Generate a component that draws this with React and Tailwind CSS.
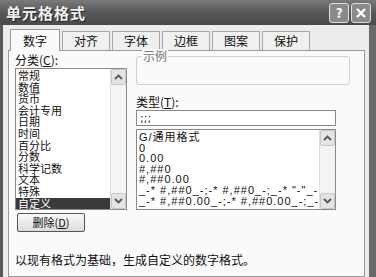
import React from 'react';

const cjk = { fontFamily: '"Noto Sans CJK SC", "Liberation Sans", sans-serif' };

const categories = ['常规', '数值', '货币', '会计专用', '日期', '时间', '百分比', '分数', '科学记数', '文本', '特殊', '自定义'];
const formats = [
  'G/通用格式',
  '0',
  '0.00',
  '#,##0',
  '#,##0.00',
  '_-* #,##0_-;-* #,##0_-;_-* "-"_-;_-@_-',
  '_-* #,##0.00_-;-* #,##0.00_-;_-* "-"??_-;_-@_-',
];
const tabs = ['数字', '对齐', '字体', '边框', '图案', '保护'];

const ScrollBar = () => (
  <div className="flex w-[16px] shrink-0 flex-col bg-[#f4f4f4] border-l border-[#e0e0e0]">
    <div className="flex h-[16px] items-center justify-center rounded-[2px] border border-[#c8c8c8] bg-[#e4e4e4]">
      <svg width="9" height="6" viewBox="0 0 9 6"><path d="M1 5 L4.5 1.5 L8 5" stroke="#555" strokeWidth="1.8" fill="none" /></svg>
    </div>
    <div className="flex-1" />
    <div className="flex h-[16px] items-center justify-center rounded-[2px] border border-[#c8c8c8] bg-[#e4e4e4]">
      <svg width="9" height="6" viewBox="0 0 9 6"><path d="M1 1 L4.5 4.5 L8 1" stroke="#555" strokeWidth="1.8" fill="none" /></svg>
    </div>
  </div>
);

export default function App() {
  return (
    <div className="relative flex h-[277px] w-[376px] flex-col overflow-hidden bg-[#ececec] text-[#111]" style={cjk}>
      {/* title bar */}
      <div className="flex h-[25px] shrink-0 items-center justify-between bg-gradient-to-b from-[#7a7a7a] via-[#585858] to-[#4a4a4a] pl-[6px] pr-[5px]">
        <span className="text-[15px] font-bold leading-none tracking-[1px] text-[#f2f2f2] [text-shadow:1px_1px_0_#222]">单元格格式</span>
        <div className="flex gap-[2px]">
          <div className="flex h-[20px] w-[20px] items-center justify-center rounded-[3px] border border-[#ddd] bg-[#8a8a8a] text-[13px] font-bold leading-none text-white">?</div>
          <div className="flex h-[20px] w-[20px] items-center justify-center rounded-[3px] border border-[#ddd] bg-[#8a8a8a]">
            <svg width="12" height="12" viewBox="0 0 12 12"><path d="M2 2 L10 10 M10 2 L2 10" stroke="#fff" strokeWidth="2.4" /></svg>
          </div>
        </div>
      </div>

      <div className="flex flex-1 border-l-[3px] border-r-[7px] border-l-[#5a5a5a] border-r-[#6a6a6a] pl-[5px] pr-[4px] pt-[4px]">
        <div className="flex min-w-0 flex-1 flex-col">
          {/* tabs */}
          <div className="flex h-[21px] items-end pl-[2px]">
            {tabs.map((t, i) => (
              <div
                key={t}
                className={
                  i === 0
                    ? 'relative z-10 -mb-px flex h-[22px] w-[50px] items-center justify-center border border-b-0 border-[#9a9a9a] bg-[#fafafa] text-[12px]'
                    : 'flex h-[19px] w-[48px] items-center justify-center border border-b-0 border-[#a8a8a8] bg-[#f0f0f0] text-[12px] ml-[2px]'
                }
              >
                {t}
              </div>
            ))}
          </div>

          {/* panel */}
          <div className="flex flex-1 flex-col border border-[#9a9a9a] bg-[#fafafa] pl-[6px] pr-[6px] pt-[2px]">
            <div className="flex gap-[9px]">
              {/* left column */}
              <div className="flex w-[112px] shrink-0 flex-col">
                <div className="h-[14px] text-[12px] leading-[14px]">分类(<span className="underline">C</span>):</div>
                <div className="mt-[1px] flex h-[142px] border border-[#8a8a8a] bg-white">
                  <div className="flex flex-1 flex-col pt-[1px]">
                    {categories.map((c, i) => (
                      <div
                        key={c}
                        className={
                          i === categories.length - 1
                            ? 'h-[11.6px] bg-[#3a3a3a] pl-[2px] text-[11px] leading-[11.6px] text-white'
                            : 'h-[11.6px] pl-[2px] text-[11px] leading-[11.6px]'
                        }
                      >
                        {c}
                      </div>
                    ))}
                  </div>
                  <ScrollBar />
                </div>
                <div className="mt-[3px] ml-[2px] flex h-[19px] w-[68px] items-center justify-center rounded-[2px] border border-[#555] bg-gradient-to-b from-[#fafafa] to-[#dcdcdc] text-[11px]">
                  删除(<span className="underline">D</span>)
                </div>
              </div>

              {/* right column */}
              <div className="flex min-w-0 flex-1 flex-col pr-[8px]">
                <div className="relative mt-[3px] h-[29px] rounded-[3px] border border-[#d0d0d0]">
                  <span className="absolute -top-[8px] left-[5px] bg-[#fafafa] px-[1px] text-[12px] leading-[14px] text-[#777]">示例</span>
                </div>
                <div className="mt-[10px] text-[12px] leading-[14px]">类型(<span className="underline">T</span>):</div>
                <div className="mt-[1px] mr-[14px] flex h-[16px] items-center border border-[#8a8a8a] bg-white pl-[3px] text-[11px] leading-none" style={{ fontFamily: '"DejaVu Sans", sans-serif' }}>;;;</div>
                <div className="mt-[3px] mr-[14px] flex h-[81px] border border-[#8a8a8a] bg-white">
                  <div className="min-w-0 flex-1 overflow-hidden pl-[2px] pt-[2px]">
                    {formats.map((f) => (
                      <div key={f} className="h-[10.6px] whitespace-nowrap text-[11px] leading-[10.6px] tracking-[1px]" style={{ fontFamily: '"Liberation Sans", "Noto Sans CJK SC", sans-serif' }}>
                        {f}
                      </div>
                    ))}
                  </div>
                  <ScrollBar />
                </div>
              </div>
            </div>
            <div className="mt-[21px] text-[12px] leading-[14px]">以现有格式为基础，生成自定义的数字格式。</div>
          </div>
        </div>
      </div>
    </div>
  );
}
